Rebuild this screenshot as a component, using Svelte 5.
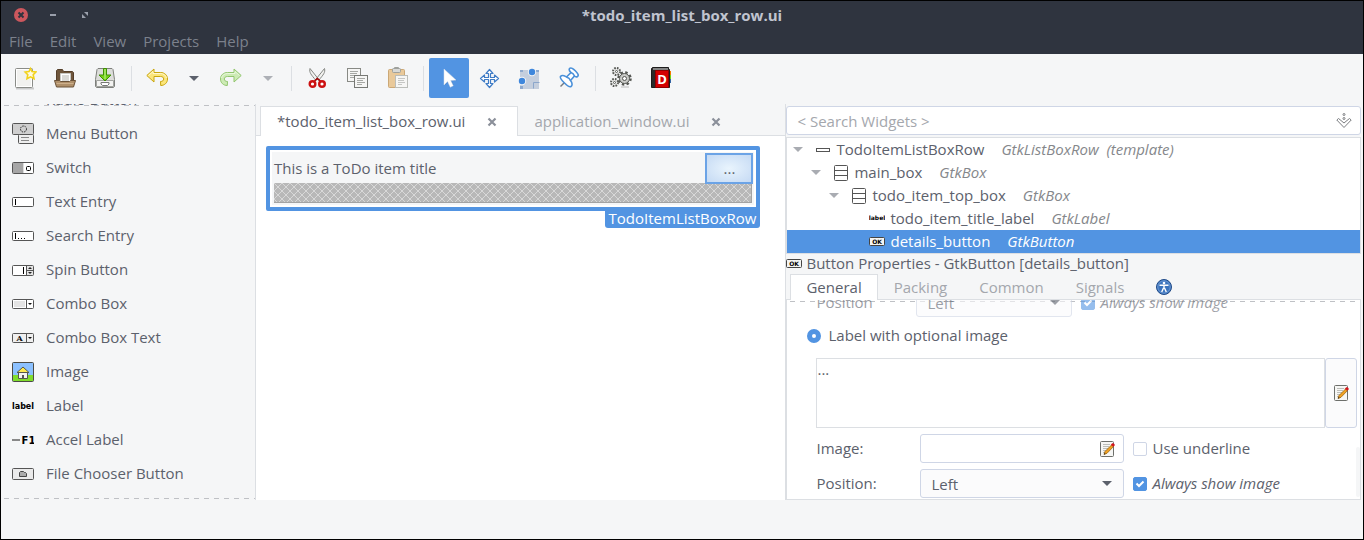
<script>
  const menus = ['File', 'Edit', 'View', 'Projects', 'Help'];

  const palette = [
    ['radio', 'Radio Button'],
    ['menu', 'Menu Button'],
    ['switch', 'Switch'],
    ['entry', 'Text Entry'],
    ['search', 'Search Entry'],
    ['spin', 'Spin Button'],
    ['combo', 'Combo Box'],
    ['combotext', 'Combo Box Text'],
    ['image', 'Image'],
    ['label', 'Label'],
    ['accel', 'Accel Label'],
    ['file', 'File Chooser Button']
  ];

  const tree = [
    { level: 0, icon: 'row', name: 'TodoItemListBoxRow', type: 'GtkListBoxRow  (template)', open: true },
    { level: 1, icon: 'box', name: 'main_box', type: 'GtkBox', open: true },
    { level: 2, icon: 'box', name: 'todo_item_top_box', type: 'GtkBox', open: true },
    { level: 3, icon: 'label', name: 'todo_item_title_label', type: 'GtkLabel', open: false },
    { level: 3, icon: 'ok', name: 'details_button', type: 'GtkButton', open: false }
  ];
  let selected = $state('details_button');

  const tabs = ['General', 'Packing', 'Common', 'Signals'];
  let tab = $state('General');

  const files = ['*todo_item_list_box_row.ui', 'application_window.ui'];
  let file = $state('*todo_item_list_box_row.ui');

  const tools = [
    [['new', 'New'], ['open', 'Open'], ['save', 'Save']],
    [['undo', 'Undo'], ['down', 'Undo history'], ['redo', 'Redo'], ['downoff', 'Redo history']],
    [['cut', 'Cut'], ['copy', 'Copy'], ['paste', 'Paste']],
    [['pointer', 'Select widgets'], ['move', 'Drag and resize'], ['margin', 'Edit margins'], ['pin', 'Edit alignment']],
    [['gears', 'Preview'], ['book', 'Documentation']]
  ];
  let tool = $state('pointer');
</script>

{#snippet toolIcon(name)}
  <svg class="tool-icon" viewBox="0 0 24 24" aria-hidden="true">
    {#if name === 'new'}
      <path d="M3 22.5h18" stroke="#c9cacb" stroke-width="2" />
      <rect x="2.5" y="2.500" width="17" height="19" rx="1" fill="#f1f1ef" stroke="#8a8c88" />
      <rect x="3.500" y="3.500" width="15" height="17" fill="none" stroke="#fff" />
      <path d="M17.500 2.500l1.500 3.100 3.800.4-2.600 2.700.8 4-3.500-1.800-3.500 1.800.8-4-2.600-2.700 3.800-.4z" fill="#fffbe0" stroke="#f2d21b" stroke-width="1.600" />
    {:else if name === 'open'}
      <path d="M3.500 17V4.500l1-1h5l1 2h9l1 1V17z" fill="#6f563c" stroke="#553f2a" />
      <path d="M7.500 7.500h10V17h-10z" fill="#fff" stroke="#c9c9c5" />
      <path d="M9 10h7M9 12h7M9 14h7" stroke="#b5b5b0" />
      <path d="M1.500 14.500h5l1 1h9l1-1h5l-2 6.500h-17z" fill="#b0906a" stroke="#6b5238" />
      <path d="M3.500 17.500h17" stroke="#cdb08c" />
    {:else if name === 'save'}
      <path d="M5 2.500h14l1 1 1.500 10v7l-1 1h-17l-1-1v-7L4 3.500z" fill="#dcddda" stroke="#7e807c" />
      <path d="M3.500 14.500h17v6h-17z" fill="#f3f3f1" stroke="#a2a4a0" />
      <path d="M8 16.500h8v1.500l-1.500 1.500h-5L8 18z" fill="#fff" stroke="#777" />
      <path d="M10.500 2.500h3v6.500h4.500l-6 6-6-6h4.500z" fill="#73d216" stroke="#3f8f04" />
      <path d="M12 3v10" stroke="#c5f29a" />
    {:else if name === 'undo'}
      <path d="M1.800 9.500L9 3v3.500h6.500c4 0 7 2.600 7 6.500s-3 6.500-6.800 6.500l-.2-4c2 0 3.200-1 3.200-2.500s-1.200-2.500-3.200-2.500H9V16z" fill="#fbe57a" stroke="#c9a60c" />
      <path d="M3.500 9.500L8 5.500v2h7.500c3 0 5.500 2 5.900 4.500" fill="none" stroke="#fff8cf" />
    {:else if name === 'redo'}
      <path d="M22.200 9.500L15 3v3.500H8.500c-4 0-7 2.600-7 6.500s3 6.500 6.800 6.500l.2-4c-2 0-3.200-1-3.200-2.500s1.200-2.500 3.200-2.500H15V16z" fill="#cdebb5" stroke="#92c66f" />
      <path d="M20.500 9.500L16 5.500v2H8.500c-3 0-5.500 2-5.900 4.500" fill="none" stroke="#e9f8dc" />
    {:else if name === 'down'}
      <path d="M7 10h10l-5 5z" fill="#5c616c" />
    {:else if name === 'downoff'}
      <path d="M7 10h10l-5 5z" fill="#adb0b6" />
    {:else if name === 'cut'}
      <path d="M5 2.500c-1 4 1 6 6 12l2-2zM19.500 2.500c1 4-1 6-6 12l-2-2z" fill="#f2f2f0" stroke="#858783" />
      <path d="M9.500 15l2.800-2.500L15.500 15" fill="none" stroke="#a40000" stroke-width="1.500" />
      <ellipse cx="7.500" cy="18" rx="2.800" ry="2.800" fill="#fff" stroke="#cc1111" stroke-width="2.400" />
      <ellipse cx="17" cy="18" rx="2.800" ry="2.800" fill="#fff" stroke="#cc1111" stroke-width="2.400" />
    {:else if name === 'copy'}
      <rect x="2.500" y="2.500" width="13" height="13" fill="#f6f6f5" stroke="#888a85" />
      <path d="M5 5.500h8M5 7.500h7M5 9.500h8M5 11.500h5" stroke="#a6a8a4" />
      <rect x="9.500" y="9.500" width="13" height="12" fill="#f6f6f5" stroke="#777975" />
      <path d="M12 12.500h8M12 14.500h6M12 16.500h8M12 18.500h5" stroke="#a6a8a4" />
    {:else if name === 'paste'}
      <rect x="3.500" y="3.500" width="16" height="18" rx="1" fill="#e9c99a" stroke="#cba876" />
      <rect x="7.500" y="2.500" width="8" height="4" rx="1" fill="#d8d9d7" stroke="#9fa19d" />
      <path d="M9.500 2.500v-1h4v1" fill="none" stroke="#9fa19d" />
      <rect x="10.500" y="9.500" width="12" height="12" fill="#f6f6f5" stroke="#bbbdb9" />
      <path d="M13 12.500h7M13 14.500h6M13 16.500h7M13 18.500h4" stroke="#c5c6c4" />
    {:else if name === 'pointer'}
      <path d="M8 4v15l3.600-3.200L14 21l3-1.500-2.400-5 5-.3z" fill="#2f6cb5" opacity=".5" />
      <path d="M7 3v16l3.600-3.400 2.700 5.600 3-1.500-2.600-5.200 5.300-.4z" fill="#fff" stroke="#d5dde8" stroke-width=".5" />
    {:else if name === 'move'}
      <path d="M12 3l3.500 4H13v4h4V8.500l4 3.500-4 3.500V13h-4v4h2.500L12 21l-3.500-4H11v-4H7v2.500L3 12l4-3.500V11h4V7H8.500z" transform="translate(.5 .5)" fill="#fff" stroke="#3f7cc6" stroke-width="1.200" stroke-linejoin="round" />
    {:else if name === 'margin'}
      <path d="M3 4h19v19H3z" fill="#c4cedd" />
      <path d="M3 4h3v2H3zM19 4h3v2h-3zM3 20h3v3H3z" fill="#8ea9cd" />
      <path d="M16.500 22.500v-6h6" fill="none" stroke="#8ba6cb" />
      <circle cx="15" cy="6" r="4.200" fill="#f5f6f7" />
      <circle cx="15" cy="6" r="3.200" fill="#3f87dc" />
      <circle cx="5" cy="15" r="4.200" fill="#f5f6f7" />
      <circle cx="5" cy="15" r="3.200" fill="#3f87dc" />
    {:else if name === 'pin'}
      <path d="M8 16l-4.500 4.500" stroke="#777b80" stroke-width="1.500" />
      <path d="M12.500 2.500c1.500-1.500 3.500 0 6 2.500s3.500 4.500 2 5.500-3-.5-3-.5l-4 4.500c2 2.500 2 5 .5 6s-4-1-6.500-3.500-5-5-4-6.500 3.500-1.500 6 .5L14 6.500s-2.500-2-1.500-4z" fill="#fff" stroke="#4a90d9" stroke-width="1.600" />
      <path d="M9.500 11c2 .7 3.500 2 4 3.500M14 6.500c1.500.5 3 2 3.500 3.500" fill="none" stroke="#4a90d9" stroke-width="1.400" />
    {:else if name === 'gears'}
      <g fill="none" stroke="#555753">
        <circle cx="7.500" cy="5.500" r="3.500" fill="#eee" stroke-width="2" stroke-dasharray="1.600 1.150" />
        <circle cx="5.500" cy="16.500" r="3.500" fill="#eee" stroke-width="2" stroke-dasharray="1.600 1.150" />
        <circle cx="15.500" cy="12.500" r="6" stroke-width="2.500" stroke-dasharray="2.400 2.310" />
        <circle cx="15.500" cy="12.500" r="5" fill="#c9cac7" />
        <circle cx="15.500" cy="12.500" r="2" fill="#fff" />
        <circle cx="7.500" cy="5.500" r="1" fill="#fff" />
        <circle cx="5.500" cy="16.500" r="1" fill="#fff" />
      </g>
      <path d="M12 21h8" stroke="#bbb" />
    {:else if name === 'book'}
      <path d="M19 5h3v5h-3z" fill="#f57900" />
      <path d="M19 9h3v4h-3z" fill="#73d216" />
      <path d="M19 13h3v4h-3z" fill="#3465a4" />
      <path d="M2.500 2.500l1-1h16v2h1v18h-18z" fill="#2b2b2b" stroke="#1c1c1c" />
      <path d="M4 3h15" stroke="#ddd" />
      <path d="M6.500 4.500h13v17h-13z" fill="#d40000" stroke="#8e0000" />
      <text x="13" y="18" text-anchor="middle" class="book-letter">D</text>
    {/if}
  </svg>
{/snippet}

{#snippet widgetIcon(name)}
  <svg class="widget-icon" viewBox="0 0 22 22" aria-hidden="true">
    {#if name === 'menu'}
      <rect x=".5" y=".5" width="21" height="11" rx="1" fill="#cfcfcf" stroke="#555" />
      <circle cx="11.500" cy="6" r="3" fill="none" stroke="#222" stroke-dasharray="1.500 1" />
      <rect x="6.500" y="11.500" width="15" height="9" rx="1" fill="#eee" stroke="#555" />
      <path d="M9 14.500h8M9 17.500h8" stroke="#888" />
    {:else if name === 'switch'}
      <rect x=".5" y="5.500" width="21" height="11" rx="1" fill="#fff" stroke="#555" />
      <path d="M1 6h10v10H1z" fill="#a6a6a6" />
      <path d="M11.500 6v10" stroke="#ddd" />
      <rect x="14.500" y="9.500" width="4" height="4" rx="1" fill="none" stroke="#000" />
    {:else if name === 'entry'}
      <rect x=".5" y="6.500" width="21" height="9" rx="1" fill="#fff" stroke="#555" />
      <path d="M3.500 8v6" stroke="#000" />
    {:else if name === 'search'}
      <rect x=".5" y="6.500" width="21" height="9" rx="1" fill="#fff" stroke="#555" />
      <path d="M3.500 8v6M6 13.500h1M9 13.500h1M12 13.500h1" stroke="#000" />
    {:else if name === 'spin'}
      <rect x=".5" y="6.500" width="21" height="10" rx="1" fill="#fff" stroke="#555" />
      <path d="M15 7h6v9h-6z" fill="#e4e4e4" />
      <path d="M11.500 8v7" stroke="#000" />
      <path d="M14.500 7v9M15 11.500h6" stroke="#555" />
      <path d="M16 10h4l-2-2zM16 13h4l-2 2z" fill="#222" />
    {:else if name === 'combo'}
      <rect x=".5" y="6.500" width="21" height="9" rx="1" fill="#fff" stroke="#555" />
      <path d="M2 8h11v6H2z" fill="#e4e4e4" />
      <path d="M14.500 7v8" stroke="#555" />
      <path d="M16 10h4l-2 2z" fill="#111" />
    {:else if name === 'combotext'}
      <rect x=".5" y="6.500" width="21" height="9" rx="1" fill="#efefef" stroke="#555" />
      <text x="7.500" y="14" text-anchor="middle" class="pixel-serif">A</text>
      <path d="M14.500 7v8" stroke="#555" />
      <path d="M16 10h4l-2 2z" fill="#111" />
    {:else if name === 'image'}
      <rect x=".5" y="1.500" width="21" height="19" rx="1" fill="#8cc1ff" stroke="#4b4b45" />
      <path d="M1 14h20v6H1z" fill="#7fdc2c" />
      <path d="M6.500 11.500h9v6h-9z" fill="#f4f4ee" stroke="#55574f" />
      <path d="M5 11.500l6-5.500 6 5.500z" fill="#fce94f" stroke="#55574f" />
      <path d="M10 14h2v3h-2z" fill="#555" />
    {:else if name === 'label'}
      <text x="11" y="14" text-anchor="middle" class="pixel">label</text>
    {:else if name === 'accel'}
      <path d="M0 11h8" stroke="#888" stroke-width="2" />
      <text x="16.500" y="15" text-anchor="middle" class="pixel-big">F1</text>
    {:else if name === 'file'}
      <rect x=".5" y="5.500" width="21" height="11" rx="1" fill="#eaeaea" stroke="#555" />
      <path d="M7.500 13.500v-4l1-1h3l1 1h1l1 1v3z" fill="#aaa" stroke="#444" />
    {:else}
      <circle cx="4" cy="11" r="4" fill="#555" />
    {/if}
  </svg>
{/snippet}

{#snippet treeIcon(name)}
  <svg class="tree-icon" viewBox="0 0 16 16" aria-hidden="true">
    {#if name === 'row'}
      <rect x="1.500" y="6.500" width="13" height="3" fill="#fff" stroke="#555" />
    {:else if name === 'box'}
      <rect x="1.500" y=".5" width="13" height="15" rx="1" fill="#fff" stroke="#555" />
      <path d="M2 5.500h12M2 10.500h12" stroke="#555" />
    {:else if name === 'label'}
      <text x="8" y="9" text-anchor="middle" class="pixel-small">label</text>
    {:else}
      <rect x=".5" y="3.500" width="15" height="8" rx="1" fill="#f4f4f2" stroke="#444" />
      <text x="8" y="10" text-anchor="middle" class="pixel-small">OK</text>
    {/if}
  </svg>
{/snippet}

{#snippet editIcon()}
  <svg class="tree-icon" viewBox="0 0 16 16" aria-hidden="true">
    <rect x="1.500" y=".5" width="13" height="15" rx="1" fill="#f6f6f4" stroke="#6d6f6b" />
    <path d="M4 3.500h7M4 5.500h6M4 7.500h5M4 9.500h3M4 11.500h2" stroke="#bcbdb9" />
    <path d="M5 13.500l1-3 6.500-6.500 1.800 1.800-6.300 6.500z" fill="#f0a020" stroke="#8f5902" stroke-width=".7" />
    <path d="M11.800 3.800l1.500-1.500c1-.6 2.800.8 2.300 2L14.300 5.800z" fill="#d4141c" />
    <path d="M5 13.500l.5-1.600 1.100 1z" fill="#222" />
  </svg>
{/snippet}

<div class="window">
  <header>
    <div class="titlebar">
      <div class="controls">
        <button class="control close" aria-label="Close window">
          <svg viewBox="0 0 14 14"><circle cx="7" cy="7" r="7" fill="#cc575d" /><path d="M4.500 4.500l5 5M9.500 4.500l-5 5" stroke="#2f343f" stroke-width="2" /></svg>
        </button>
        <button class="control" aria-label="Minimize window">
          <svg viewBox="0 0 14 14"><path d="M4 7h6" stroke="#9a9fab" stroke-width="2" /></svg>
        </button>
        <button class="control" aria-label="Maximize window">
          <svg viewBox="0 0 14 14"><path d="M6 4h4v4zM4 6v4h4z" fill="#9a9fab" /></svg>
        </button>
      </div>
      <h1>*todo_item_list_box_row.ui</h1>
    </div>
    <nav class="menubar">
      {#each menus as menu}<button>{menu}</button>{/each}
    </nav>
  </header>

  <div class="toolbar" role="toolbar" aria-label="Main toolbar">
    {#each tools as group, i}
      {#if i > 0}<span class="separator"></span>{/if}
      {#each group as [icon, title]}
        <button
          class="tool"
          class:narrow={icon.startsWith('down')}
          class:active={tool === icon}
          aria-label={title}
          onclick={() => i === 3 && (tool = icon)}
        >{@render toolIcon(icon)}</button>
      {/each}
    {/each}
  </div>

  <main>
    <aside class="palette">
      <ul>
        {#each palette as [icon, name]}
          <li><button>{@render widgetIcon(icon)}<span>{name}</span></button></li>
        {/each}
      </ul>
    </aside>

    <section class="editor">
      <div class="file-tabs">
        {#each files as name}
          <div class="file-tab" class:current={file === name}>
            <button class="file-name" onclick={() => (file = name)}>{name}</button>
            <button class="file-close" aria-label="Close {name}">
              <svg viewBox="0 0 10 10"><path d="M1.500 1.500l7 7M8.500 1.500l-7 7" stroke="#8b909a" stroke-width="2.200" /></svg>
            </button>
          </div>
        {/each}
      </div>
      <div class="canvas">
        <div class="widget">
          <div class="widget-body">
            <div class="widget-top">
              <span>This is a ToDo item title</span>
              <button class="details">...</button>
            </div>
            <div class="placeholder"></div>
          </div>
          <span class="widget-tag">TodoItemListBoxRow</span>
        </div>
      </div>
    </section>

    <aside class="inspector">
      <div class="search">
        <input type="text" placeholder="< Search Widgets >" aria-label="Search widgets" />
        <svg class="tree-icon" viewBox="0 0 16 16" aria-hidden="true">
          <g fill="none" stroke="#7b7d80">
            <circle cx="8" cy="1.500" r="1" /><circle cx="8" cy="5.500" r="1" />
            <path d="M.8 7l1.700-1.500L5 7.500 8 10l3-2.500 2.500-2L15.200 7 8 14.500z" />
          </g>
        </svg>
      </div>

      <div class="tree" role="tree">
        {#each tree as node}
          <button
            class="node level-{node.level}"
            class:selected={selected === node.name}
            role="treeitem"
            aria-selected={selected === node.name}
            onclick={() => (selected = node.name)}
          >
            <svg class="expander" viewBox="0 0 10 6" aria-hidden="true">
              {#if node.open}<path d="M0 0h10L5 5z" fill="#a9acb2" />{/if}
            </svg>
            {@render treeIcon(node.icon)}
            <span>{node.name}</span>
            <i>{node.type}</i>
          </button>
        {/each}
      </div>

      <h2>{@render treeIcon('ok')}<span>Button Properties - GtkButton [details_button]</span></h2>

      <div class="tabs" role="tablist">
        {#each tabs as name}
          <button role="tab" class:current={tab === name} aria-selected={tab === name} onclick={() => (tab = name)}>{name}</button>
        {/each}
        <button role="tab" aria-selected="false" aria-label="Accessibility">
          <svg class="tree-icon" viewBox="0 0 16 16">
            <circle cx="8" cy="8" r="7.500" fill="#3c74bd" stroke="#204a87" />
            <circle cx="8" cy="8" r="6.200" fill="none" stroke="#7fa8dc" stroke-width=".7" />
            <circle cx="8" cy="4" r="1.300" fill="#fff" />
            <path d="M3.500 6.200h9M8 6v3.500M7.500 9l-1.800 4M8.500 9l1.800 4" fill="none" stroke="#fff" stroke-width="1.400" />
          </svg>
        </button>
      </div>

      <div class="properties">
        <div class="field disabled">
          <label for="pos-off">Position</label>
          <select id="pos-off" disabled><option>Left</option></select>
          <label class="check"><input type="checkbox" checked disabled /><i>Always show image</i></label>
        </div>
        <label class="radio"><input type="radio" name="content" checked /><span>Label with optional image</span></label>
        <div class="text-row">
          <textarea aria-label="Label text">...</textarea>
          <button class="edit" aria-label="Edit text">{@render editIcon()}</button>
        </div>
        <div class="field">
          <label for="image">Image:</label>
          <div class="entry">
            <input id="image" type="text" />
            <button aria-label="Choose image">{@render editIcon()}</button>
          </div>
          <label class="check"><input type="checkbox" /><span>Use underline</span></label>
        </div>
        <div class="field">
          <label for="position">Position:</label>
          <select id="position"><option>Left</option></select>
          <label class="check"><input type="checkbox" checked /><i>Always show image</i></label>
        </div>
        <span class="scrollbar"></span>
      </div>
    </aside>
  </main>
  <footer></footer>
</div>

<style>
  :global(body) {
    background: #f5f6f7;
  }
  .window {
    --line: #dcdfe3;
    --field-line: #cfd6e6;
    --blue: #5294e2;
    --text: #5c616c;
    --muted: #a4a7ad;
    box-sizing: border-box;
    height: 100vh;
    display: flex;
    flex-direction: column;
    border: 1px solid #000;
    background: #f5f6f7;
    color: var(--text);
    font: 15px/20px 'Open Sans', 'Noto Sans', sans-serif;
    overflow: hidden;
  }
  .window *,
  .window *::before,
  .window *::after {
    box-sizing: border-box;
  }
  button,
  input,
  select,
  textarea {
    margin: 0;
    padding: 0;
    border: 0;
    background: none;
    color: inherit;
    font: inherit;
    outline: none;
  }
  svg {
    display: block;
    flex: none;
  }
  h1,
  h2 {
    margin: 0;
    font-size: 15px;
    line-height: 20px;
  }

  header {
    background: #2f343f;
    color: #7c818c;
  }
  .titlebar {
    display: grid;
    grid-template-columns: 1fr auto 1fr;
    align-items: center;
    height: 28px;
    padding: 0 13px;
  }
  .titlebar h1 {
    color: #c0c4cf;
  }
  .controls {
    display: flex;
    gap: 18px;
  }
  .control svg {
    width: 14px;
    height: 14px;
  }
  .menubar {
    display: flex;
    gap: 17px;
    height: 25px;
    padding: 0 8px 2px;
  }

  .toolbar {
    display: flex;
    align-items: center;
    height: 48px;
    padding: 0 4px;
    margin-bottom: 2px;
  }
  .tool {
    display: grid;
    place-items: center;
    width: 40px;
    height: 40px;
    border-radius: 2px;
  }
  .tool.narrow {
    width: 34px;
  }
  .tool.active {
    background: var(--blue);
  }
  .tool-icon {
    width: 24px;
    height: 24px;
  }
  .separator {
    width: 1px;
    height: 25px;
    margin: 0 5px 0 6px;
    background: var(--line);
  }
  .book-letter {
    font: bold 13px 'Open Sans', sans-serif;
    fill: #fff;
  }

  main {
    flex: 1;
    min-height: 0;
    display: grid;
    grid-template-columns: 255px 529fr 577fr;
  }
  footer {
    height: 39px;
  }

  .palette {
    position: relative;
    display: flex;
    flex-direction: column;
    justify-content: flex-end;
    min-height: 0;
    padding: 0 0 9px 11px;
    border-right: 1px solid var(--line);
    overflow: hidden;
  }
  .palette::before,
  .palette::after,
  .properties::before {
    content: '';
    position: absolute;
    left: 3px;
    right: 0;
    height: 1px;
    background: repeating-linear-gradient(90deg, #bfc1c5 0 5px, transparent 5px 10px);
  }
  .palette::before,
  .properties::before {
    top: 1px;
  }
  .palette::after {
    bottom: 1px;
  }
  .palette ul {
    margin: 0;
    padding: 0;
    list-style: none;
  }
  .palette button {
    display: flex;
    align-items: center;
    gap: 12px;
    height: 34px;
  }
  .palette span,
  .node span,
  .node i,
  .field label:first-child,
  .field span,
  .field i,
  .radio span,
  h2 span,
  .file-name,
  .tabs button {
    padding-bottom: 2px;
  }
  .widget-icon {
    width: 22px;
    height: 22px;
  }
  .pixel,
  .pixel-big,
  .pixel-small {
    font: bold 8px 'DejaVu Sans', sans-serif;
    fill: #000;
  }
  .pixel-big {
    font-size: 10px;
  }
  .pixel-small {
    font-size: 6px;
  }
  .pixel-serif {
    font: bold 8px 'DejaVu Serif', serif;
    fill: #111;
  }

  .editor {
    display: flex;
    flex-direction: column;
    min-width: 0;
  }
  .file-tabs {
    display: flex;
    height: 32px;
    padding: 2px 4px 0;
    box-shadow: inset 0 -1px var(--line);
  }
  .file-tab {
    display: flex;
    align-items: center;
    gap: 22px;
    padding: 0 20px 0 16px;
    border: 1px solid transparent;
    border-bottom: 0;
    color: var(--muted);
  }
  .file-tab.current {
    border-color: var(--line);
    background: #fff;
    color: var(--text);
  }
  .file-tab:not(.current) {
    padding-left: 15px;
  }
  .file-close svg {
    width: 10px;
    height: 10px;
  }
  .canvas {
    flex: 1;
    padding: 10px 25px 10px 10px;
    background: #fff;
  }
  .widget {
    position: relative;
    padding: 2px;
    border: 4px solid var(--blue);
    border-radius: 2px;
  }
  .widget-body {
    padding: 1px 2px 2px;
    background: #f5f6f7;
  }
  .widget-top {
    display: flex;
    align-items: center;
    justify-content: space-between;
    height: 30px;
  }
  .details {
    position: relative;
    width: 48px;
    height: 31px;
    margin-right: -1px;
    border: 2px solid #6ba3e6;
    background: radial-gradient(#e9f4fd, #c5daf4);
  }
  .placeholder {
    height: 20px;
    border: 1px solid #a3a3a3;
    border-width: 0 1px 1px 0;
    background: #b8b8b8 url("data:image/svg+xml,%3Csvg xmlns='http://www.w3.org/2000/svg' width='8' height='8'%3E%3Cpath d='M-1 -1l10 10M9 -1l-10 10' stroke='%23d8d8d8' stroke-width='1'/%3E%3C/svg%3E");
  }
  .widget-tag {
    position: absolute;
    top: 100%;
    right: -4px;
    padding: 1px 4px 0;
    border-radius: 0 0 3px 3px;
    background: var(--blue);
    color: #fff;
  }

  .inspector {
    display: flex;
    flex-direction: column;
    min-width: 0;
    min-height: 0;
    margin-right: 2px;
    border-left: 1px solid var(--line);
  }
  .search {
    display: flex;
    align-items: center;
    height: 29px;
    margin: 2px 0;
    padding: 0 8px 0 10px;
    border: 1px solid var(--field-line);
    border-radius: 3px;
    background: #fff;
  }
  .search input {
    flex: 1;
    min-width: 0;
  }
  .search input::placeholder {
    color: var(--muted);
    opacity: 1;
  }
  .tree-icon {
    width: 16px;
    height: 16px;
  }
  .tree {
    display: flex;
    flex-direction: column;
    border: 1px solid var(--line);
    background: #fff;
  }
  .node {
    display: flex;
    align-items: center;
    height: 23px;
    padding-left: 6px;
    text-align: left;
    white-space: pre;
  }
  .node span {
    margin: 0 17px 0 5px;
  }
  .node i {
    color: #85878b;
  }
  .level-1 {
    padding-left: 24px;
  }
  .level-2 {
    padding-left: 42px;
  }
  .level-3 {
    padding-left: 60px;
  }
  .node.selected {
    background: var(--blue);
  }
  .node.selected span,
  .node.selected i {
    color: #fff;
  }
  .expander {
    width: 10px;
    height: 6px;
    margin-right: 12px;
  }
  h2 {
    display: flex;
    align-items: center;
    gap: 4px;
    height: 20px;
    font-weight: normal;
  }
  .tabs {
    display: flex;
    height: 26px;
    padding: 0 4px;
    box-shadow: inset 0 -1px var(--line);
  }
  .tabs button {
    padding: 0 15px 2px;
    border: 1px solid transparent;
    border-bottom: 0;
    color: var(--muted);
  }
  .tabs .current {
    border-color: var(--line);
    background: #fff;
    color: var(--text);
  }

  .properties {
    position: relative;
    flex: 1;
    min-height: 0;
    display: flex;
    flex-direction: column;
    justify-content: flex-end;
    gap: 6px;
    padding: 0 3px 1px 29px;
    border: solid var(--line);
    border-width: 0 1px 1px;
    background: #fff;
    overflow: hidden;
  }
  .field {
    flex: none;
    display: flex;
    align-items: center;
    height: 29px;
  }
  .field > label:first-child {
    width: 104px;
  }
  .field.disabled > label:first-child {
    width: 100px;
  }
  .disabled {
    opacity: 0.6;
  }
  select,
  .entry {
    width: 204px;
    height: 29px;
    border: 1px solid var(--field-line);
    border-radius: 3px;
  }
  .disabled select {
    width: 156px;
    color: inherit;
    opacity: 1;
  }
  select {
    appearance: none;
    padding: 0 10px;
    background: #fbfbfc url("data:image/svg+xml,%3Csvg xmlns='http://www.w3.org/2000/svg' width='10' height='5'%3E%3Cpath d='M0 0h10L5 5z' fill='%235c616c'/%3E%3C/svg%3E") no-repeat right 11px center;
  }
  .entry {
    display: flex;
    align-items: center;
    padding: 0 8px;
  }
  .entry input {
    flex: 1;
    min-width: 0;
  }
  .check,
  .radio {
    display: flex;
    align-items: center;
    gap: 5px;
    margin-left: 9px;
  }
  .radio {
    gap: 7px;
    height: 20px;
    margin: 3px 0 6px -9px;
  }
  .check input,
  .radio input {
    appearance: none;
    width: 14px;
    height: 14px;
    border: 1px solid var(--field-line);
    border-radius: 2px;
    background: #fff;
  }
  .check input:checked {
    border-color: var(--blue);
    background: var(--blue) url("data:image/svg+xml,%3Csvg xmlns='http://www.w3.org/2000/svg' width='12' height='12'%3E%3Cpath d='M2.500 5.500l2.500 2.500 4.500-4.500' fill='none' stroke='white' stroke-width='2'/%3E%3C/svg%3E") center no-repeat;
  }
  .radio input {
    border: 5px solid var(--blue);
    border-radius: 50%;
  }
  .text-row {
    flex: none;
    display: flex;
    height: 70px;
  }
  textarea {
    flex: 1;
    min-width: 0;
    border: 1px solid var(--line);
    resize: none;
  }
  .edit {
    display: grid;
    place-items: center;
    width: 32px;
    border: 1px solid var(--field-line);
    border-radius: 3px;
    background: #fbfbfc;
  }
  .scrollbar {
    position: absolute;
    right: 0;
    bottom: 2px;
    width: 4px;
    height: 50px;
    border-radius: 2px;
    background: #f5f6f7;
  }
</style>
